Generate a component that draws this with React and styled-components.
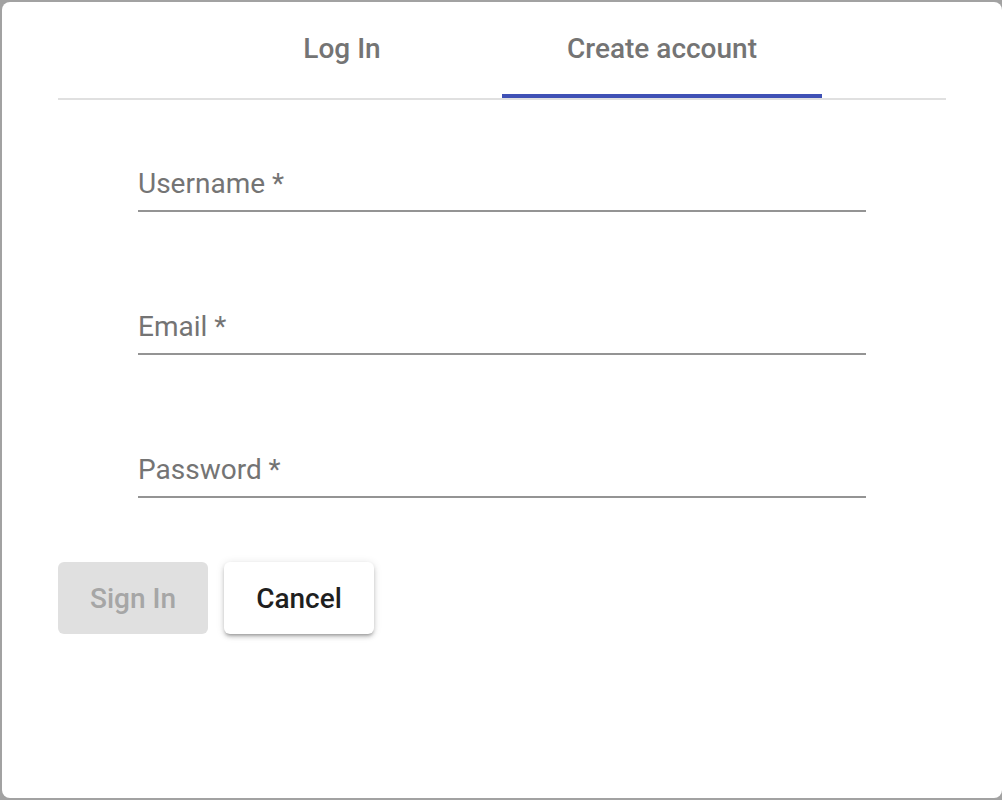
import styled, { createGlobalStyle } from "styled-components";
import { useState } from "react";

const GlobalStyle = createGlobalStyle`
  html, body {
    margin: 0;
    background: #a2a2a2;
    font-family: Roboto, "Liberation Sans", Arial, sans-serif;
  }
`;

const Dialog = styled.div`
  box-sizing: border-box;
  margin: 2px 0 2px 2px;
  height: 796px;
  background: #fff;
  border-radius: 8px;
  padding: 0 56px;
`;

const TabBar = styled.div`
  display: flex;
  justify-content: center;
  border-bottom: 2px solid #e0e0e0;
`;

const Tab = styled.button`
  width: 320px;
  height: 96px;
  padding: 0;
  border: none;
  background: none;
  font-family: inherit;
  font-size: 28px;
  font-weight: 500;
  color: #747474;
  cursor: pointer;
  border-bottom: 4px solid ${(p) => (p.$active ? "#3f51b5" : "transparent")};
  box-sizing: border-box;
  display: flex;
  align-items: center;
  justify-content: center;
`;

const Form = styled.form`
  display: flex;
  flex-direction: column;
  padding: 0 80px;
  gap: 37px;
  margin-top: 6px;
`;

const Field = styled.label`
  display: flex;
  flex-direction: column;
  width: 728px;
  height: 106px;
  justify-content: flex-end;
`;

const Input = styled.input`
  border: none;
  outline: none;
  border-bottom: 2px solid #949494;
  padding: 0 0 10px;
  font-family: inherit;
  font-size: 28px;
  color: #222;
  &::placeholder {
    color: #747474;
  }
`;

const Actions = styled.div`
  display: flex;
  gap: 16px;
  margin-top: 64px;
`;

const Button = styled.button`
  width: 150px;
  height: 72px;
  border: none;
  border-radius: 6px;
  font-family: inherit;
  font-size: 28px;
  font-weight: 500;
  background: ${(p) => (p.disabled ? "#e0e0e0" : "#fff")};
  color: ${(p) => (p.disabled ? "#a6a6a6" : "#1f1f1f")};
  box-shadow: ${(p) =>
    p.disabled
      ? "none"
      : "0 3px 3px -2px rgba(0,0,0,0.25), 0 3px 4px 0 rgba(0,0,0,0.16), 0 1px 8px 0 rgba(0,0,0,0.12)"};
  cursor: pointer;
`;

export default function App() {
  const [tab, setTab] = useState(1);
  return (
    <>
      <GlobalStyle />
      <Dialog>
        <TabBar>
          <Tab $active={tab === 0} onClick={() => setTab(0)}>
            Log In
          </Tab>
          <Tab $active={tab === 1} onClick={() => setTab(1)}>
            Create account
          </Tab>
        </TabBar>
        <Form onSubmit={(e) => e.preventDefault()}>
          <Field>
            <Input placeholder="Username *" />
          </Field>
          <Field>
            <Input placeholder="Email *" />
          </Field>
          <Field>
            <Input type="password" placeholder="Password *" />
          </Field>
        </Form>
        <Actions>
          <Button disabled>Sign In</Button>
          <Button>Cancel</Button>
        </Actions>
      </Dialog>
    </>
  );
}
